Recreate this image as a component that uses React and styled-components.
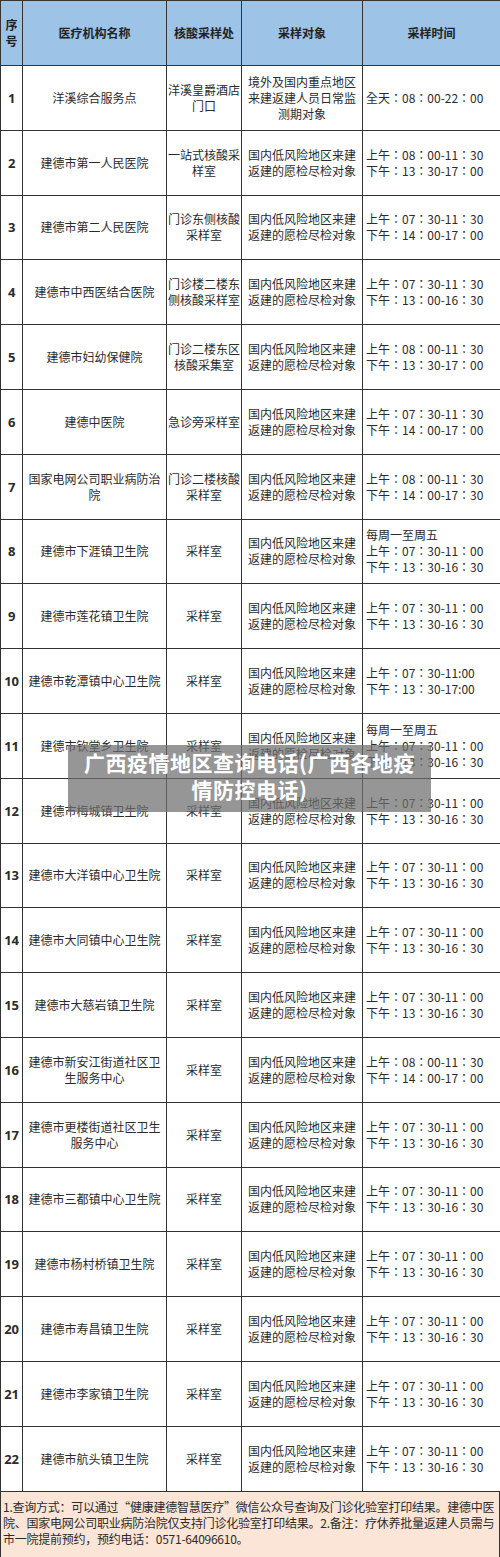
import React from "react";
import styled, { createGlobalStyle } from "styled-components";

const GlobalStyle = createGlobalStyle`
  html, body {
    margin: 0;
    padding: 0;
    background: #ffffff;
  }
  body {
    font-family: "Noto Sans CJK SC", "Noto Sans", sans-serif;
    color: #2b2b2b;
  }
`;

const Page = styled.div`
  position: relative;
  width: 500px;
  height: 1557px;
  overflow: hidden;
  background: #fff;
`;

const Table = styled.table`
  width: 500px;
  border-collapse: collapse;
  table-layout: fixed;
  font-size: 12px;
  line-height: 16px;
`;

const HeadRow = styled.tr`
  height: 65px;
  background: #9dc3e6;
`;

const Th = styled.th`
  border: 1.5px solid #333;
  font-weight: bold;
  font-size: 12px;
  line-height: 16px;
  padding: 0;
  text-align: center;
  color: #222;
`;

const Row = styled.tr`
  height: 64.8px;
`;

const Td = styled.td`
  border: 1.5px solid #333;
  padding: 0 ${(p) => p.$pad || 0}px;
  text-align: ${(p) => (p.$left ? "left" : "center")};
  vertical-align: middle;
  word-break: break-all;
  color: #2b2b2b;
`;

const Num = styled(Td)`
  font-weight: bold;
  font-size: 13px;
  white-space: nowrap;
  letter-spacing: -0.3px;
  font-family: "Open Sans", "Noto Sans", sans-serif;
`;

const Times = styled(Td)`
  font-family: "Noto Sans CJK TC", "Noto Sans CJK SC", sans-serif;
`;

const Line = styled.div`
  white-space: nowrap;
`;

const Footer = styled.div`
  height: 66px;
  box-sizing: border-box;
  background: #fbe5d6;
  border: 1.5px solid #333;
  border-top: none;
  padding: 7px 2px 0;
  font-size: 12px;
  line-height: 16px;
  letter-spacing: -0.25px;
  color: #2b2b2b;
  word-break: break-all;
`;

const Watermark = styled.div`
  position: absolute;
  left: 68px;
  top: 745px;
  width: 363px;
  height: 67px;
  background: rgba(110, 110, 110, 0.72);
  color: #fff;
  font-weight: bold;
  font-size: 21px;
  line-height: 27px;
  letter-spacing: 0.5px;
  text-align: center;
  padding: 4px 6px 0;
  box-sizing: border-box;
`;

const LOW = "国内低风险地区来建返建的愿检尽检对象";
const late = ["上午：07：30-11：00", "下午：13：30-16：30"];

const rows = [
  ["洋溪综合服务点", "洋溪皇爵酒店门口", "境外及国内重点地区来建返建人员日常监测期对象", ["全天：08：00-22：00"]],
  ["建德市第一人民医院", "一站式核酸采样室", LOW, ["上午：08：00-11：30", "下午：13：30-17：00"]],
  ["建德市第二人民医院", "门诊东侧核酸采样室", LOW, ["上午：07：30-11：30", "下午：14：00-17：00"]],
  ["建德市中西医结合医院", "门诊楼二楼东侧核酸采样室", LOW, ["上午：07：30-11：30", "下午：13：00-16：30"]],
  ["建德市妇幼保健院", "门诊二楼东区核酸采集室", LOW, ["上午：08：00-11：30", "下午：13：30-17：00"]],
  ["建德中医院", "急诊旁采样室", LOW, ["上午：07：30-11：30", "下午：14：00-17：00"]],
  ["国家电网公司职业病防治院", "门诊二楼核酸采样室", LOW, ["上午：08：00-11：30", "下午：14：00-17：30"]],
  ["建德市下涯镇卫生院", "采样室", LOW, ["每周一至周五", ...late]],
  ["建德市莲花镇卫生院", "采样室", LOW, late],
  ["建德市乾潭镇中心卫生院", "采样室", LOW, ["上午：07：30-11:00", "下午：13：30-17:00"]],
  ["建德市钦堂乡卫生院", "采样室", LOW, ["每周一至周五", ...late]],
  ["建德市梅城镇卫生院", "采样室", LOW, late],
  ["建德市大洋镇中心卫生院", "采样室", LOW, late],
  ["建德市大同镇中心卫生院", "采样室", LOW, late],
  ["建德市大慈岩镇卫生院", "采样室", LOW, late],
  ["建德市新安江街道社区卫生服务中心", "采样室", LOW, ["上午：08：00-11：30", "下午：14：00-17：00"]],
  ["建德市更楼街道社区卫生服务中心", "采样室", LOW, late],
  ["建德市三都镇中心卫生院", "采样室", LOW, late],
  ["建德市杨村桥镇卫生院", "采样室", LOW, late],
  ["建德市寿昌镇卫生院", "采样室", LOW, late],
  ["建德市李家镇卫生院", "采样室", LOW, late],
  ["建德市航头镇卫生院", "采样室", LOW, late],
];

export default function App() {
  return (
    <Page>
      <GlobalStyle />
      <Table>
        <colgroup>
          <col style={{ width: 22 }} />
          <col style={{ width: 144 }} />
          <col style={{ width: 75 }} />
          <col style={{ width: 121 }} />
          <col style={{ width: 138 }} />
        </colgroup>
        <thead>
          <HeadRow>
            <Th>序号</Th>
            <Th>医疗机构名称</Th>
            <Th>核酸采样处</Th>
            <Th>采样对象</Th>
            <Th>采样时间</Th>
          </HeadRow>
        </thead>
        <tbody>
          {rows.map(([name, place, target, times], i) => (
            <Row key={i}>
              <Num>{i + 1}</Num>
              <Td $pad={4}>{name}</Td>
              <Td>{place}</Td>
              <Td $pad={5}>{target}</Td>
              <Times $left $pad={3}>
                {times.map((t) => (
                  <Line key={t}>{t}</Line>
                ))}
              </Times>
            </Row>
          ))}
        </tbody>
      </Table>
      <Footer>
        1.查询方式：可以通过“健康建德智慧医疗”微信公众号查询及门诊化验室打印结果。建德中医院、国家电网公司职业病防治院仅支持门诊化验室打印结果。2.备注：疗休养批量返建人员需与市一院提前预约，预约电话：0571-64096610。
      </Footer>
      <Watermark>广西疫情地区查询电话(广西各地疫情防控电话)</Watermark>
    </Page>
  );
}
